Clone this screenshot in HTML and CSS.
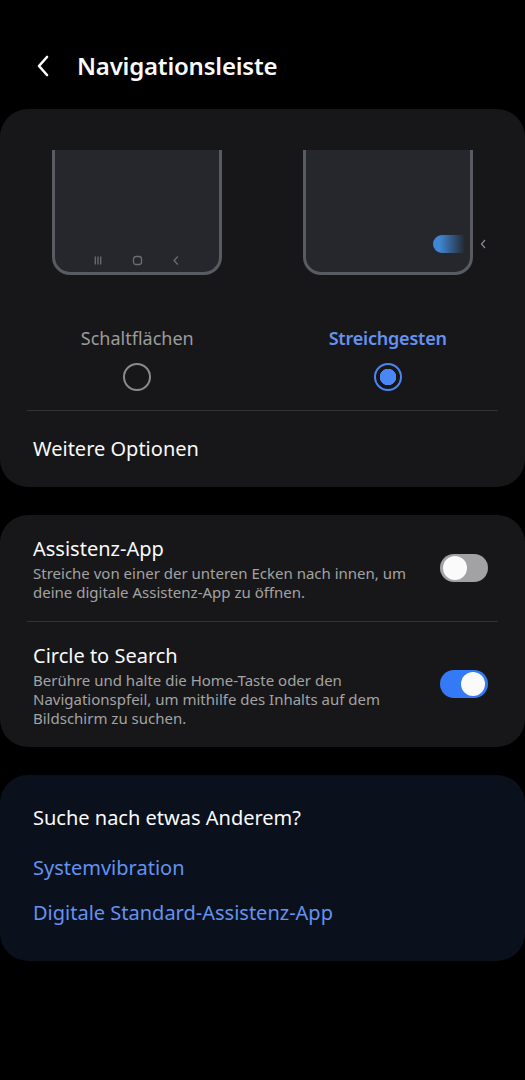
FILE: index.html
```html
<!DOCTYPE html>
<html lang="de">
<head>
    <meta charset="UTF-8">
    <meta name="viewport" content="width=device-width, initial-scale=1.0">
    <title>Navigationsleiste</title>
    <link rel="stylesheet" href="styles.css">
</head>
<body>
    <header class="top-bar">
        <svg class="back-icon" width="16" height="24" viewBox="0 0 16 24">
            <path d="M12 3 L4 12 L12 21" fill="none" stroke="#fff" stroke-width="2.6" stroke-linecap="round" stroke-linejoin="round"/>
        </svg>
        <h1>Navigationsleiste</h1>
    </header>

    <!-- Navigationstyp -->
    <section class="card">
        <div class="nav-types">
            <div class="nav-type">
                <div class="phone">
                    <div class="phone-keys">
                        <svg width="10" height="11" viewBox="0 0 10 11">
                            <path d="M2.3 1.5 V9.5 M5 1.5 V9.5 M7.7 1.5 V9.5" stroke="#6b6d74" stroke-width="1.3"/>
                        </svg>
                        <svg width="11" height="11" viewBox="0 0 11 11">
                            <rect x="1.5" y="1.5" width="8" height="8" rx="2.5" fill="none" stroke="#6b6d74" stroke-width="1.3"/>
                        </svg>
                        <svg width="10" height="11" viewBox="0 0 10 11">
                            <path d="M6.8 1.5 L3 5.5 L6.8 9.5" fill="none" stroke="#6b6d74" stroke-width="1.3"/>
                        </svg>
                    </div>
                </div>
                <span class="nav-label">Schaltflächen</span>
                <span class="radio"></span>
            </div>
            <div class="nav-type">
                <div class="phone phone-gesture">
                    <span class="swipe-hint"></span>
                    <svg class="edge-arrow" width="8" height="12" viewBox="0 0 8 12">
                        <path d="M6 2 L2.5 6 L6 10" fill="none" stroke="#8a8c92" stroke-width="1.2"/>
                    </svg>
                </div>
                <span class="nav-label active">Streichgesten</span>
                <span class="radio checked"></span>
            </div>
        </div>
        <div class="divider"></div>
        <div class="simple-row">Weitere Optionen</div>
    </section>

    <!-- Schalter -->
    <section class="card">
        <div class="switch-row">
            <div class="row-text">
                <div class="row-title">Assistenz-App</div>
                <div class="row-desc">Streiche von einer der unteren Ecken nach innen, um deine digitale Assistenz-App zu öffnen.</div>
            </div>
            <span class="switch"></span>
        </div>
        <div class="divider"></div>
        <div class="switch-row">
            <div class="row-text">
                <div class="row-title">Circle to Search</div>
                <div class="row-desc">Berühre und halte die Home-Taste oder den Navigationspfeil, um mithilfe des Inhalts auf dem Bildschirm zu suchen.</div>
            </div>
            <span class="switch on"></span>
        </div>
    </section>

    <!-- Vorschläge -->
    <section class="card suggest">
        <div class="suggest-title">Suche nach etwas Anderem?</div>
        <a href="#" class="suggest-link">Systemvibration</a>
        <a href="#" class="suggest-link">Digitale Standard-Assistenz-App</a>
    </section>
</body>
</html>
```

FILE: styles.css
```css
body {
    margin: 0;
    background-color: #000;
    color: #fafafa;
    font-family: "Noto Sans", "Open Sans", sans-serif;
}

.top-bar {
    display: flex;
    align-items: center;
    height: 109px;
    padding: 23px 0 0 35px;
    box-sizing: border-box;
}
.top-bar h1 {
    margin: 0 0 0 26px;
    font-size: 24px;
    line-height: 30px;
    font-weight: 600;
    letter-spacing: -0.2px;
}

.card {
    background-color: #171719;
    border-radius: 28px;
    margin-bottom: 28px;
}

/* Navigationstyp */
.nav-types {
    display: grid;
    grid-template-columns: 1fr 1fr;
    padding: 41px 12px 0;
}
.nav-type {
    display: flex;
    flex-direction: column;
    align-items: center;
}
.phone {
    position: relative;
    width: 170px;
    height: 125px;
    box-sizing: border-box;
    background-color: #25272c;
    border: 3px solid #595b62;
    border-top: none;
    border-radius: 0 0 18px 18px;
    display: flex;
    align-items: flex-end;
}
.phone-keys {
    display: flex;
    justify-content: space-around;
    width: 100%;
    padding: 0 24px 6px;
    box-sizing: border-box;
}
.swipe-hint {
    position: absolute;
    right: 5px;
    top: 85px;
    width: 32px;
    height: 18px;
    border-radius: 9px 0 0 9px;
    background: linear-gradient(to right, #3f87d4 20%, rgba(63, 135, 212, 0));
}
.edge-arrow {
    position: absolute;
    right: -17px;
    top: 88px;
}
.nav-label {
    margin-top: 51px;
    font-size: 18px;
    line-height: 24px;
    color: #9c9c9c;
}
.nav-label.active {
    color: #6592f0;
    font-weight: 600;
    letter-spacing: -0.2px;
}
.radio {
    margin-top: 13px;
    width: 28px;
    height: 28px;
    box-sizing: border-box;
    border: 2px solid #8a8a8a;
    border-radius: 50%;
}
.radio.checked {
    border-color: #4a86f5;
    background: radial-gradient(circle, #4a86f5 0 8px, transparent 8.5px);
}

.divider {
    height: 1px;
    margin: 19px 27px 0;
    background-color: #323234;
}
.simple-row {
    padding: 26px 33px;
    font-size: 20px;
    line-height: 24px;
}

/* Schalter */
.card .switch-row + .divider {
    margin-top: 0;
}
.switch-row {
    display: flex;
    align-items: center;
    padding: 22px 37px 19px 33px;
}
.row-text {
    flex: 1;
    padding-right: 20px;
}
.row-title {
    font-size: 20px;
    line-height: 24px;
}
.row-desc {
    margin-top: 3px;
    font-size: 15px;
    line-height: 19px;
    color: #a3a3a3;
}
.switch {
    position: relative;
    width: 48px;
    height: 28px;
    margin-bottom: 4px;
    border-radius: 14px;
    background-color: #a2a2a4;
    flex-shrink: 0;
}
.switch::after {
    content: "";
    position: absolute;
    left: 3px;
    top: 2px;
    width: 24px;
    height: 24px;
    border-radius: 50%;
    background-color: #fafafa;
}
.switch.on {
    background-color: #3479f5;
}
.switch.on::after {
    left: 21px;
}

/* Vorschläge */
.card.suggest {
    background-color: #0a111c;
    padding: 31px 33px 24px;
}
.suggest-title {
    font-size: 20px;
    line-height: 24px;
    margin-bottom: 17px;
}
.suggest-link {
    display: block;
    font-size: 20px;
    line-height: 24px;
    padding: 9px 0 12px;
    color: #6592f0;
    text-decoration: none;
}
```
